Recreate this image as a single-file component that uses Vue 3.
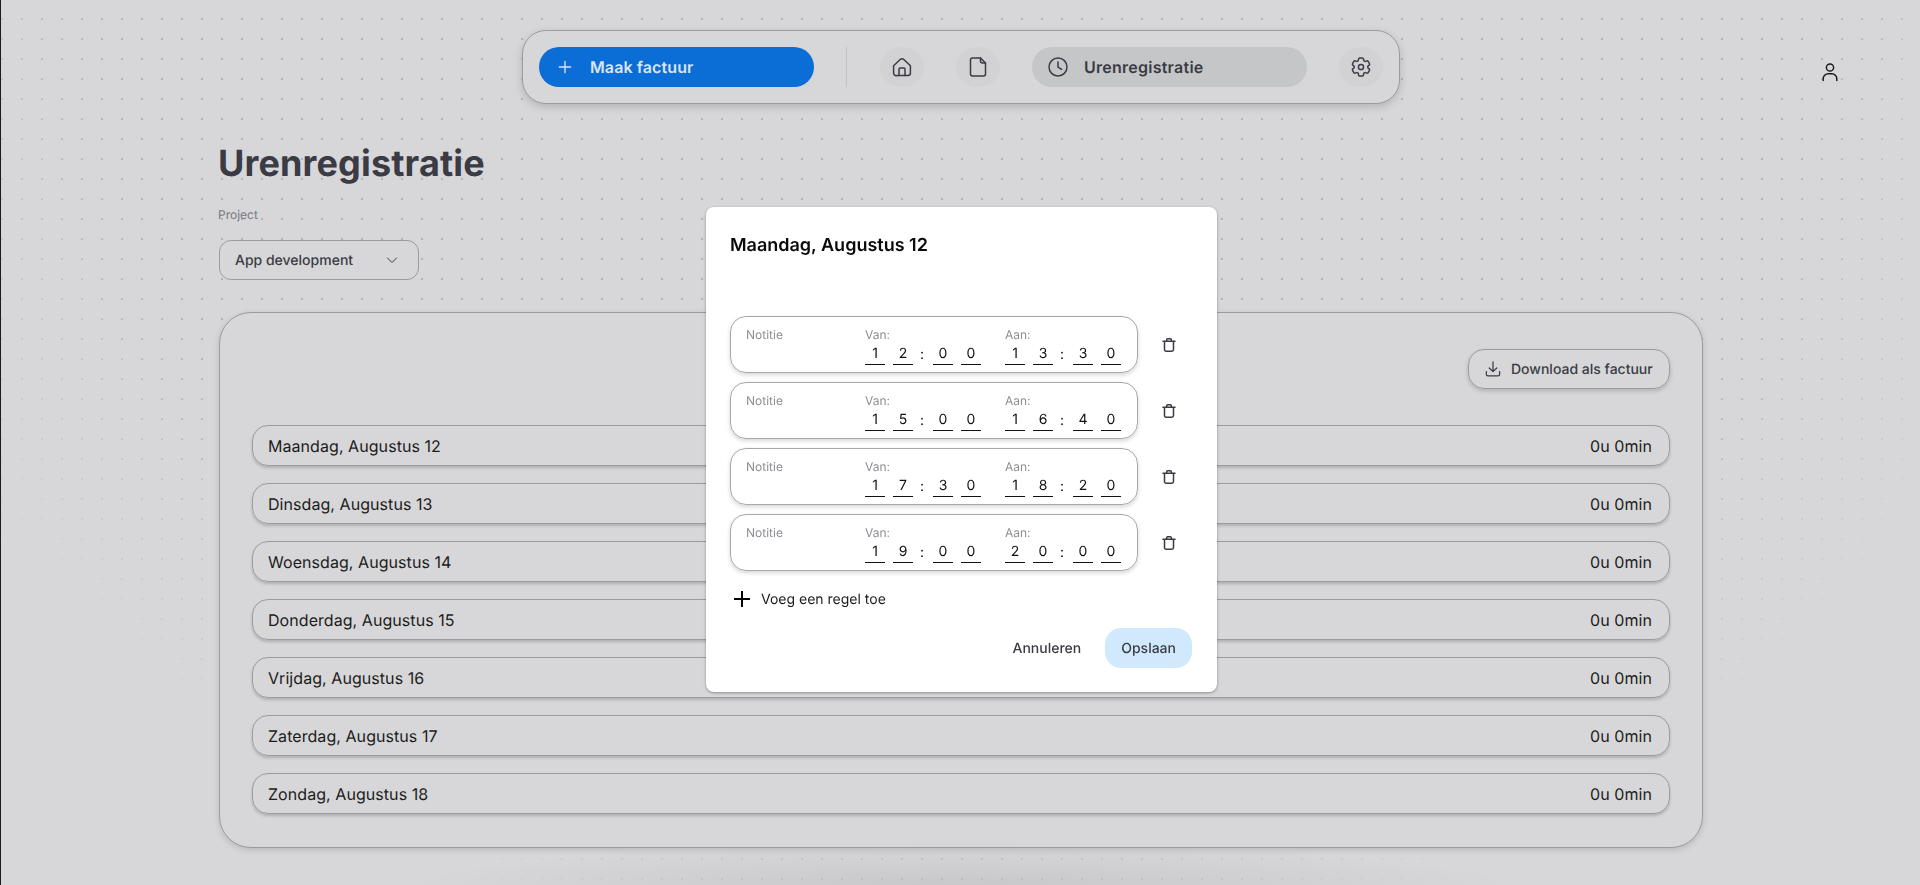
<template>
  <div class="page">
    <header class="top">
      <div></div>
      <nav class="nav">
        <button class="new-btn">
          <svg class="plus" viewBox="0 0 16 16"><path d="M8 1.5v13M1.5 8h13" /></svg>
          Maak factuur
        </button>
        <span class="divider"></span>
        <button class="round">
          <svg viewBox="0 0 24 24"><path d="M3.600 10.800 9.900 4.700a3 3 0 0 1 4.200 0l6.300 6.100V18a2.500 2.500 0 0 1-2.500 2.500h-11A2.500 2.500 0 0 1 3.600 18z" /><path d="M9 20.500V14a1 1 0 0 1 1-1h4a1 1 0 0 1 1 1v6.500" /></svg>
        </button>
        <button class="round">
          <svg viewBox="0 0 24 24"><path d="M6.500 3h8l5 5v11a2 2 0 0 1-2 2h-11a2 2 0 0 1-2-2V5a2 2 0 0 1 2-2z" /><path d="M14.500 3v3a2 2 0 0 0 2 2h3" /></svg>
        </button>
        <button class="active-link">
          <svg viewBox="0 0 24 24"><circle cx="12" cy="12" r="9" /><path d="M12 7v5.200l3.600 2.200" /></svg>
          Urenregistratie
        </button>
        <button class="round">
          <svg viewBox="0 0 24 24"><path d="M9.594 3.94c.09-.542.56-.94 1.11-.94h2.593c.55 0 1.02.398 1.11.94l.213 1.281c.063.374.313.686.645.87.074.04.147.083.22.127.325.196.72.257 1.075.124l1.217-.456a1.125 1.125 0 0 1 1.37.49l1.296 2.247a1.125 1.125 0 0 1-.26 1.431l-1.003.827c-.293.241-.438.613-.43.992a7.723 7.723 0 0 1 0 .255c-.008.378.137.75.43.991l1.004.827c.424.35.534.955.26 1.43l-1.298 2.247a1.125 1.125 0 0 1-1.369.491l-1.217-.456c-.355-.133-.75-.072-1.076.124a6.47 6.47 0 0 1-.22.128c-.331.183-.581.495-.644.869l-.213 1.281c-.09.543-.56.94-1.11.94h-2.594c-.55 0-1.019-.398-1.11-.94l-.213-1.281c-.062-.374-.312-.686-.644-.87a6.52 6.52 0 0 1-.22-.127c-.325-.196-.72-.257-1.076-.124l-1.217.456a1.125 1.125 0 0 1-1.369-.49l-1.297-2.247a1.125 1.125 0 0 1 .26-1.431l1.004-.827c.292-.24.437-.613.43-.991a6.932 6.932 0 0 1 0-.255c.007-.38-.138-.751-.43-.992l-1.004-.827a1.125 1.125 0 0 1-.26-1.43l1.297-2.247a1.125 1.125 0 0 1 1.37-.491l1.216.456c.356.133.751.072 1.076-.124.072-.044.146-.086.22-.128.332-.183.582-.495.644-.869l.214-1.28Z" /><circle cx="12" cy="12" r="2.600" /></svg>
        </button>
      </nav>
      <div class="user">
        <svg viewBox="0 0 24 24"><circle cx="12" cy="7.500" r="3.600" /><path d="M5.200 20.500v-1.700a5 5 0 0 1 5-5h3.600a5 5 0 0 1 5 5v1.700" /></svg>
      </div>
    </header>

    <main class="main">
      <h1>Urenregistratie</h1>
      <label class="field-label">Project</label>
      <div class="select">
        App development
        <svg viewBox="0 0 12 12"><path d="M1.500 4 6 8.500 10.500 4" /></svg>
      </div>

      <section class="card">
        <div class="card-actions">
          <button class="download">
            <svg viewBox="0 0 24 24"><path d="M12 3.500V15M7.500 10.800 12 15.200l4.500-4.400M4 15v3.200a2 2 0 0 0 2 2h12a2 2 0 0 0 2-2V15" /></svg>
            Download als factuur
          </button>
        </div>
        <div class="days">
          <div v-for="day in days" :key="day" class="day">
            <span>{{ day }}</span>
            <span>0u 0min</span>
          </div>
        </div>
      </section>
    </main>

    <div class="overlay">
      <div class="modal">
        <h2>Maandag, Augustus 12</h2>
        <div class="entries">
          <div v-for="(entry, i) in entries" :key="i" class="entry">
            <div class="entry-box">
              <div class="note">Notitie</div>
              <div class="time">
                <div class="time-label">Van:</div>
                <div class="digits">
                  <span class="digit">{{ entry.from[0] }}</span>
                  <span class="digit">{{ entry.from[1] }}</span>
                  <span class="colon">:</span>
                  <span class="digit">{{ entry.from[2] }}</span>
                  <span class="digit">{{ entry.from[3] }}</span>
                </div>
              </div>
              <div class="time">
                <div class="time-label">Aan:</div>
                <div class="digits">
                  <span class="digit">{{ entry.to[0] }}</span>
                  <span class="digit">{{ entry.to[1] }}</span>
                  <span class="colon">:</span>
                  <span class="digit">{{ entry.to[2] }}</span>
                  <span class="digit">{{ entry.to[3] }}</span>
                </div>
              </div>
            </div>
            <button class="trash">
              <svg viewBox="0 0 16 16"><path d="M2 4.200h12M5.600 4.200V3a1.200 1.200 0 0 1 1.200-1.200h2.400A1.200 1.200 0 0 1 10.400 3v1.200M3.500 4.200v8.300a1.700 1.700 0 0 0 1.700 1.700h5.600a1.700 1.700 0 0 0 1.700-1.700V4.200" /></svg>
            </button>
          </div>
        </div>
        <button class="add-line">
          <svg viewBox="0 0 16 16"><path d="M8 0v16M0 8h16" /></svg>
          Voeg een regel toe
        </button>
        <div class="modal-footer">
          <button class="cancel">Annuleren</button>
          <button class="save">Opslaan</button>
        </div>
      </div>
    </div>
  </div>
</template>

<script setup>
const days = [
  'Maandag, Augustus 12',
  'Dinsdag, Augustus 13',
  'Woensdag, Augustus 14',
  'Donderdag, Augustus 15',
  'Vrijdag, Augustus 16',
  'Zaterdag, Augustus 17',
  'Zondag, Augustus 18',
]

const entries = [
  { from: '1200', to: '1330' },
  { from: '1500', to: '1640' },
  { from: '1730', to: '1820' },
  { from: '1900', to: '2000' },
]
</script>

<style>
html, body {
  margin: 0;
  height: 100%;
  overflow: hidden;
  background: #d7d7d9;
}
</style>

<style scoped>
.page {
  position: relative;
  height: 885px;
  overflow: hidden;
  box-sizing: border-box;
  border-left: 1px solid #1c1c1e;
  background: #d7d7d9;
  font-family: Inter, "Liberation Sans", sans-serif;
  text-rendering: geometricPrecision;
  color: #3a3b44;
}

.page::before {
  content: "";
  position: absolute;
  inset: 0;
  background-image: radial-gradient(circle, #b4b4b8 1px, transparent 1.2px);
  background-size: 20px 20px;
  background-position: -9px 9px;
  -webkit-mask-image: radial-gradient(ellipse 1150px 1000px at 50% 0, #000 72%, transparent 100%);
  mask-image: radial-gradient(ellipse 1150px 1000px at 50% 0, #000 72%, transparent 100%);
}

.page::after {
  content: "";
  position: absolute;
  left: 400px;
  right: 400px;
  bottom: 0;
  height: 40px;
  background: radial-gradient(ellipse 50% 100% at 50% 100%, rgba(0, 0, 0, 0.07), transparent);
}

button {
  font-family: inherit;
  text-rendering: inherit;
  border: none;
  background: none;
  padding: 0;
  color: inherit;
  cursor: pointer;
}

svg {
  fill: none;
  stroke: currentColor;
  stroke-width: 1.5;
  stroke-linecap: round;
  stroke-linejoin: round;
  flex-shrink: 0;
}

.top {
  position: relative;
  display: grid;
  grid-template-columns: 1fr auto 1fr;
  padding-top: 30px;
}

.nav {
  display: flex;
  align-items: center;
  gap: 32px;
  box-sizing: border-box;
  width: 878px;
  height: 74px;
  margin-left: 1px;
  padding: 0 15px 0 16px;
  border: 1px solid #9c9c9f;
  border-radius: 24px;
  background: #d7d7d9;
  box-shadow: 0 3px 8px rgba(0, 0, 0, 0.16);
}

.new-btn {
  display: flex;
  align-items: center;
  gap: 18px;
  width: 275px;
  height: 40px;
  padding-left: 19px;
  box-sizing: border-box;
  border-radius: 20px;
  background: #0b6dd6;
  color: #dbe5f2;
  font-size: 16px;
  font-weight: 600;
  letter-spacing: 0.1px;
}

.plus {
  width: 14px;
  height: 14px;
}

.divider {
  width: 1px;
  height: 40px;
  margin-right: 1px;
  background: #c2c2c4;
}

.round {
  display: flex;
  align-items: center;
  justify-content: center;
  width: 44px;
  height: 40px;
  border-radius: 50%;
  background: #d2d2d4;
}

.round svg,
.active-link svg {
  width: 24px;
  height: 24px;
}

.active-link {
  display: flex;
  align-items: center;
  gap: 14px;
  width: 275px;
  height: 40px;
  padding-left: 14px;
  box-sizing: border-box;
  border-radius: 20px;
  background: #c5c6c8;
  font-size: 16px;
  font-weight: 600;
  letter-spacing: 0.25px;
}

.user {
  justify-self: end;
  margin: 30px 78px 0 0;
  color: #1c1c20;
}

.user svg {
  display: block;
  width: 24px;
  height: 24px;
}

.main {
  position: relative;
  padding-left: 217px;
  width: 1486px;
}

h1 {
  margin: 37px 0 0;
  font-size: 36px;
  line-height: 44px;
  font-weight: 700;
  letter-spacing: 0.15px;
  color: #3a3b44;
}

.field-label {
  display: block;
  margin-top: 22px;
  font-size: 12px;
  line-height: 16px;
  color: #77787e;
}

.select {
  display: flex;
  align-items: center;
  justify-content: space-between;
  box-sizing: border-box;
  width: 200px;
  height: 40px;
  margin: 17px 0 0 1px;
  padding: 0 20px 0 15px;
  border: 1px solid #9c9c9f;
  border-radius: 12px;
  background: #d7d7d9;
  font-size: 14px;
  font-weight: 500;
}

.select svg {
  width: 12px;
  height: 12px;
  stroke-width: 1;
}

.card {
  box-sizing: border-box;
  width: 1484px;
  height: 536px;
  margin: 32px 0 0 1px;
  padding: 36px 32px 0;
  border: 1px solid #9c9c9f;
  border-radius: 32px;
  background: #d7d7d9;
  box-shadow: 0 2px 6px rgba(0, 0, 0, 0.14);
}

.card-actions {
  display: flex;
  justify-content: flex-end;
  margin-bottom: 36px;
}

.download {
  display: flex;
  align-items: center;
  gap: 8px;
  box-sizing: border-box;
  width: 202px;
  height: 40px;
  padding-left: 14px;
  border: 1px solid #9c9c9f;
  border-radius: 16px;
  font-size: 14px;
  font-weight: 500;
  box-shadow: 0 2px 4px rgba(0, 0, 0, 0.18);
}

.download svg {
  width: 20px;
  height: 20px;
}

.days {
  display: flex;
  flex-direction: column;
  gap: 17px;
}

.day {
  display: flex;
  align-items: center;
  justify-content: space-between;
  box-sizing: border-box;
  height: 41px;
  padding: 0 17px 0 15px;
  border: 1px solid #9c9c9f;
  border-radius: 16px;
  font-size: 16px;
  letter-spacing: 0.06px;
  color: #1c1c20;
  box-shadow: 0 2px 3px rgba(0, 0, 0, 0.18);
}

.overlay {
  position: fixed;
  inset: 0;
  display: flex;
  justify-content: center;
  align-items: flex-start;
  padding: 207px 0 0 3px;
  z-index: 5;
}

.modal {
  box-sizing: border-box;
  width: 511px;
  height: 485px;
  padding: 24px 25px 24px 24px;
  border-radius: 8px;
  background: #fff;
  box-shadow: 0 1px 3px rgba(0, 0, 0, 0.35);
}

h2 {
  margin: 0;
  padding-top: 1px;
  font-size: 18px;
  line-height: 28px;
  font-weight: 600;
  color: #0a0a0c;
}

.entries {
  display: flex;
  flex-direction: column;
  gap: 9px;
  margin-top: 56px;
}

.entry {
  display: flex;
  align-items: center;
}

.entry-box {
  display: flex;
  gap: 24px;
  box-sizing: border-box;
  width: 408px;
  height: 57px;
  padding: 10px 16px 0 15px;
  border: 1px solid #a8a8aa;
  border-radius: 16px;
  box-shadow: 0 2px 4px rgba(0, 0, 0, 0.16);
}

.note {
  flex: 1;
  font-size: 12px;
  line-height: 16px;
  color: #8d8e94;
}

.time-label {
  font-size: 12px;
  line-height: 16px;
  color: #8d8e94;
}

.digits {
  display: flex;
  margin-top: 1px;
}

.digit {
  box-sizing: border-box;
  width: 20px;
  height: 21px;
  margin-right: 8px;
  border-bottom: 1px solid #111;
  font-size: 14px;
  line-height: 20px;
  text-align: center;
  color: #111;
}

.digit:last-child {
  margin-right: 0;
}

.colon {
  width: 12px;
  font-size: 14px;
  line-height: 22px;
  color: #111;
  transform: translateX(-1px);
}

.trash {
  display: flex;
  margin-left: 23px;
  color: #3a3b44;
}

.trash svg {
  width: 16px;
  height: 16px;
}

.add-line {
  display: flex;
  align-items: center;
  gap: 11px;
  height: 24px;
  margin-top: 16px;
  padding-left: 4px;
  font-size: 14px;
  color: #1c1c20;
}

.add-line svg {
  width: 16px;
  height: 16px;
  stroke: #000;
  stroke-width: 2;
  stroke-linecap: butt;
}

.modal-footer {
  display: flex;
  justify-content: flex-end;
  gap: 8px;
  margin-top: 17px;
}

.cancel,
.save {
  height: 40px;
  padding: 0 16px;
  border-radius: 16px;
  font-size: 14px;
  font-weight: 500;
}

.save {
  background: #d1e9fd;
}
</style>
